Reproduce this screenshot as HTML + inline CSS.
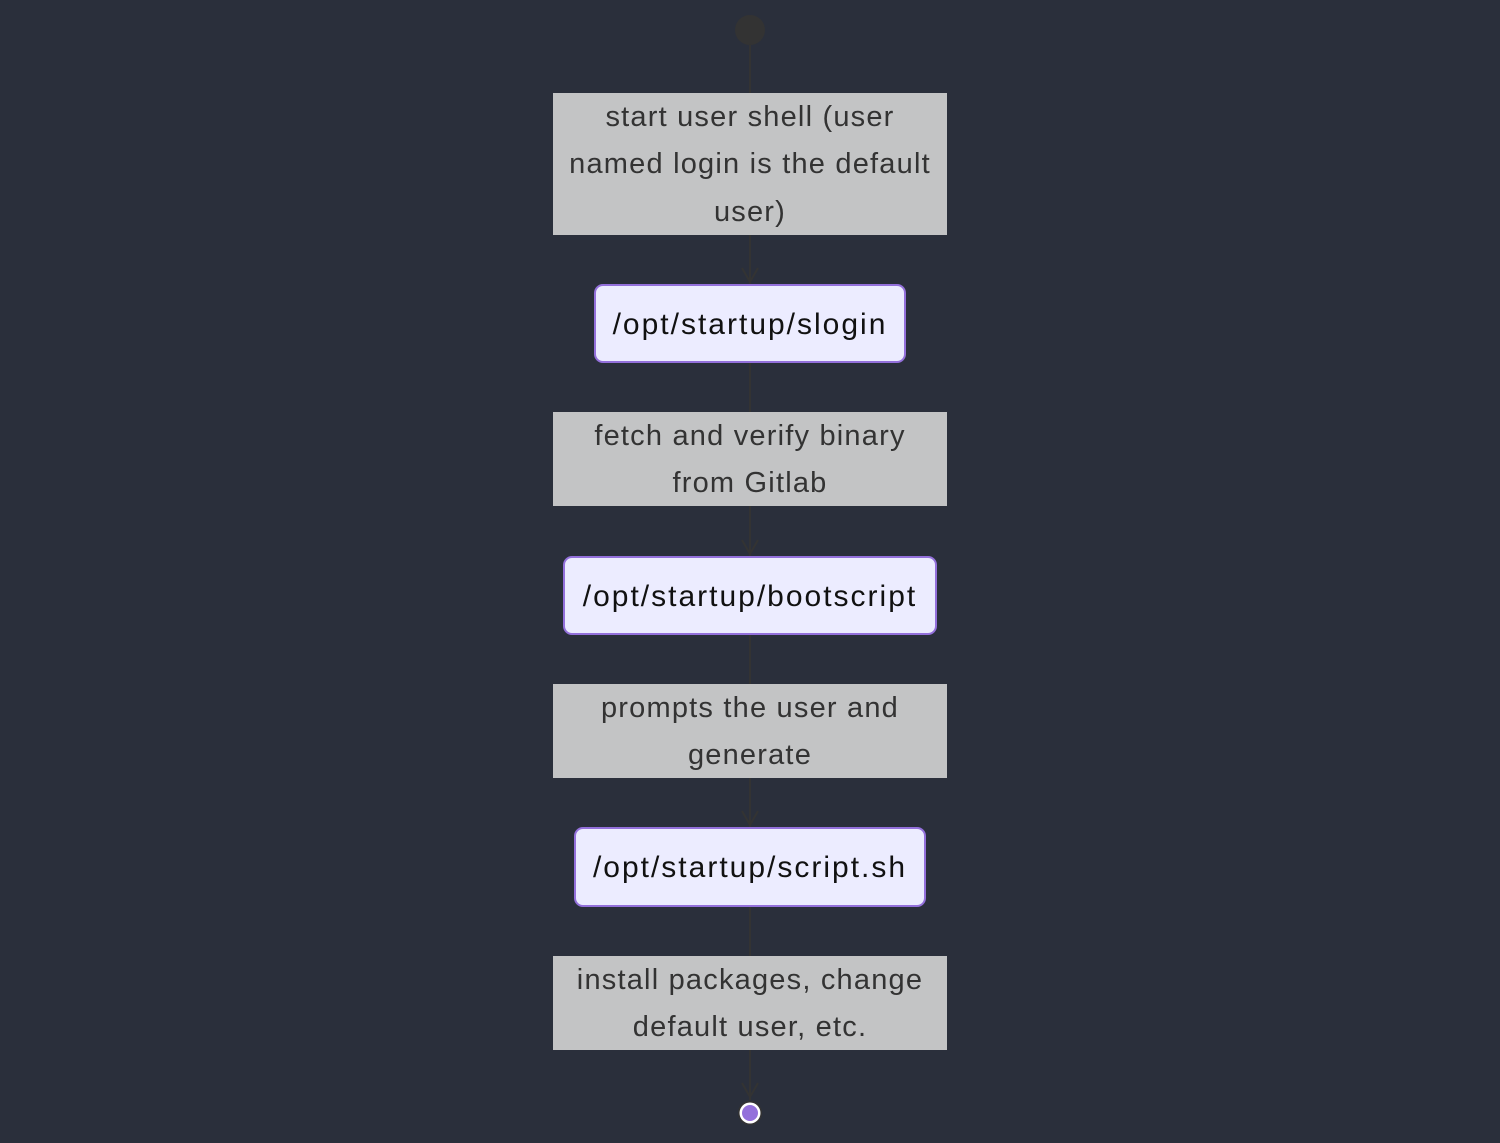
<!DOCTYPE html>
<html><head><style>
body{margin:0;width:1500px;height:1143px;background:#2a2f3b;position:relative;overflow:hidden;font-family:"Liberation Sans","DejaVu Sans",sans-serif}
.g{position:absolute;left:553px;width:394px;background:#c3c4c5;color:#333;font-size:29px;letter-spacing:1.2px;line-height:47.5px;text-align:center;display:flex;align-items:center;justify-content:center;padding-top:2px;box-sizing:border-box}
.p{position:absolute;background:#ececff;border:2px solid #9370db;border-radius:9px;box-sizing:border-box;color:#111;font-size:30px;letter-spacing:2px;display:flex;align-items:center;justify-content:center;padding-top:2px}
svg{position:absolute;left:0;top:0}
</style></head><body>
<svg width="1500" height="1143">
<line x1="750" y1="30" x2="750" y2="1100" stroke="#333" stroke-width="2"/>
<g fill="none" stroke="#333" stroke-width="2">
<path d="M742 268 L750 282 L758 268"/><path d="M742 540 L750 554 L758 540"/><path d="M742 811 L750 825 L758 811"/><path d="M742 1083 L750 1097 L758 1083"/>
</g>
<circle cx="750" cy="30" r="15" fill="#333"/>
<circle cx="750" cy="1113" r="12" fill="#333"/>
<circle cx="750" cy="1113" r="10.5" fill="#fff"/>
<circle cx="750" cy="1113" r="8" fill="#9370db"/>
</svg>
<div class="g" style="top:93px;height:142px">start user shell (user<br>named login is the default<br>user)</div>
<div class="p" style="left:594px;top:284px;width:312px;height:79px">/opt/startup/slogin</div>
<div class="g" style="top:412px;height:94px">fetch and verify binary<br>from Gitlab</div>
<div class="p" style="left:563px;top:556px;width:374px;height:79px">/opt/startup/bootscript</div>
<div class="g" style="top:684px;height:94px">prompts the user and<br>generate</div>
<div class="p" style="left:574px;top:827px;width:352px;height:80px">/opt/startup/script.sh</div>
<div class="g" style="top:956px;height:94px">install packages, change<br>default user, etc.</div>
</body></html>
